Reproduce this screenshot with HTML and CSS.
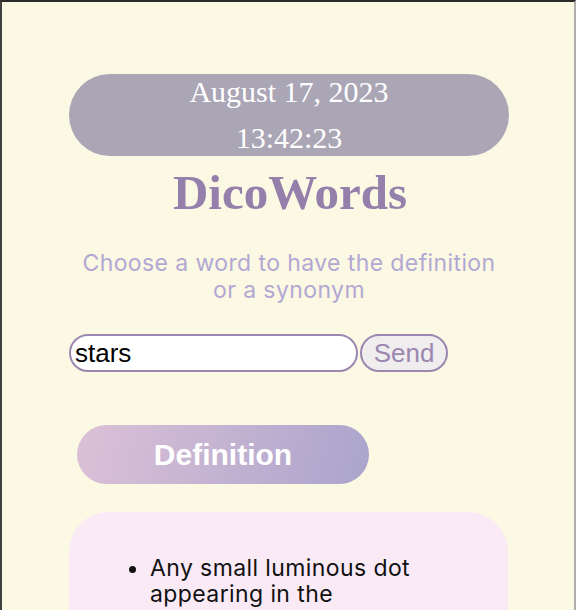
FILE: index.html
```html
<!DOCTYPE html>
<html lang="en">
<head>
<meta charset="utf-8">
<title>DicoWords</title>
<link rel="stylesheet" href="styles.css">
</head>
<body>
<main class="app">
  <div class="clock">
    <div class="clock-line">August 17, 2023</div>
    <div class="clock-line">13:42:23</div>
  </div>
  <h1 class="title">DicoWords</h1>
  <p class="subtitle">Choose a word to have the definition<br>or a synonym</p>
  <form class="search">
    <input class="search-input" type="text" value="stars">
    <button class="send" type="button">Send</button>
  </form>
  <button class="tab" type="button">Definition</button>
  <section class="card">
    <ul class="defs">
      <li>Any small luminous dot appearing in the cloudless portion of the night sky, especially with a fixed location relative to other such dots.</li>
    </ul>
  </section>
</main>
</body>
</html>
```
FILE: styles.css
```css
html {
  background: #fbf8e3;
}
body {
  margin: 0;
  min-height: 100vh;
  box-sizing: border-box;
  border-top: 2px solid #2b2b2b;
  border-left: 2px solid #404040;
  border-right: 2px solid #b0aeaa;
  background: #fbf8e3;
  overflow: hidden;
}
.app {
  width: 440px;
  margin: 72px 0 0 67px;
  display: flex;
  flex-direction: column;
}
.clock {
  height: 82px;
  border-radius: 41px;
  background: #aba6b5;
  color: #ffffff;
  font-family: "Liberation Serif", serif;
  font-size: 30px;
  line-height: 46px;
  display: flex;
  flex-direction: column;
  justify-content: center;
  align-items: center;
}
.title {
  margin: 9px 0 0;
  font-family: "Liberation Serif", serif;
  font-weight: bold;
  font-size: 49px;
  line-height: 56px;
  color: #9480ab;
  text-align: center;
  padding-left: 2px;
}
.subtitle {
  margin: 29px 0 0;
  font-family: Inter, "Noto Sans", sans-serif;
  font-size: 23px;
  letter-spacing: 0.4px;
  line-height: 27px;
  color: #b2a8d3;
  text-align: center;
}
.search {
  margin: 30px 0 0;
  display: flex;
  gap: 2px;
}
.search-input {
  box-sizing: border-box;
  width: 289px;
  height: 38px;
  margin: 0;
  padding: 0 4px;
  border: 2px solid #9b87b0;
  border-radius: 19px;
  background: #ffffff;
  font-family: "Liberation Sans", Arial, sans-serif;
  font-size: 26px;
  color: #000000;
  outline: none;
}
.send {
  box-sizing: border-box;
  width: 88px;
  height: 38px;
  margin: 0;
  padding: 0;
  border: 2px solid #9b87b0;
  border-radius: 19px;
  background: #efedee;
  font-family: "Liberation Sans", Arial, sans-serif;
  font-size: 26px;
  color: #9b87b0;
}
.tab {
  align-self: flex-start;
  margin: 53px 0 0 8px;
  width: 292px;
  height: 59px;
  padding: 0;
  border: none;
  border-radius: 30px;
  background: linear-gradient(105deg, #dcc1d7 0%, #aaa4cc 100%);
  font-family: "Liberation Sans", Arial, sans-serif;
  font-weight: bold;
  font-size: 30px;
  color: #ffffff;
}
.card {
  margin-top: 28px;
  width: 439px;
  box-sizing: border-box;
  padding: 21px 41px 40px;
  border-radius: 40px;
  background: #f9eaf6;
}
.defs {
  margin: 22px 0;
  padding: 0 40px;
  font-family: Inter, "Noto Sans", sans-serif;
  font-size: 23px;
  letter-spacing: 0.4px;
  line-height: 26px;
  color: #111111;
}
```
